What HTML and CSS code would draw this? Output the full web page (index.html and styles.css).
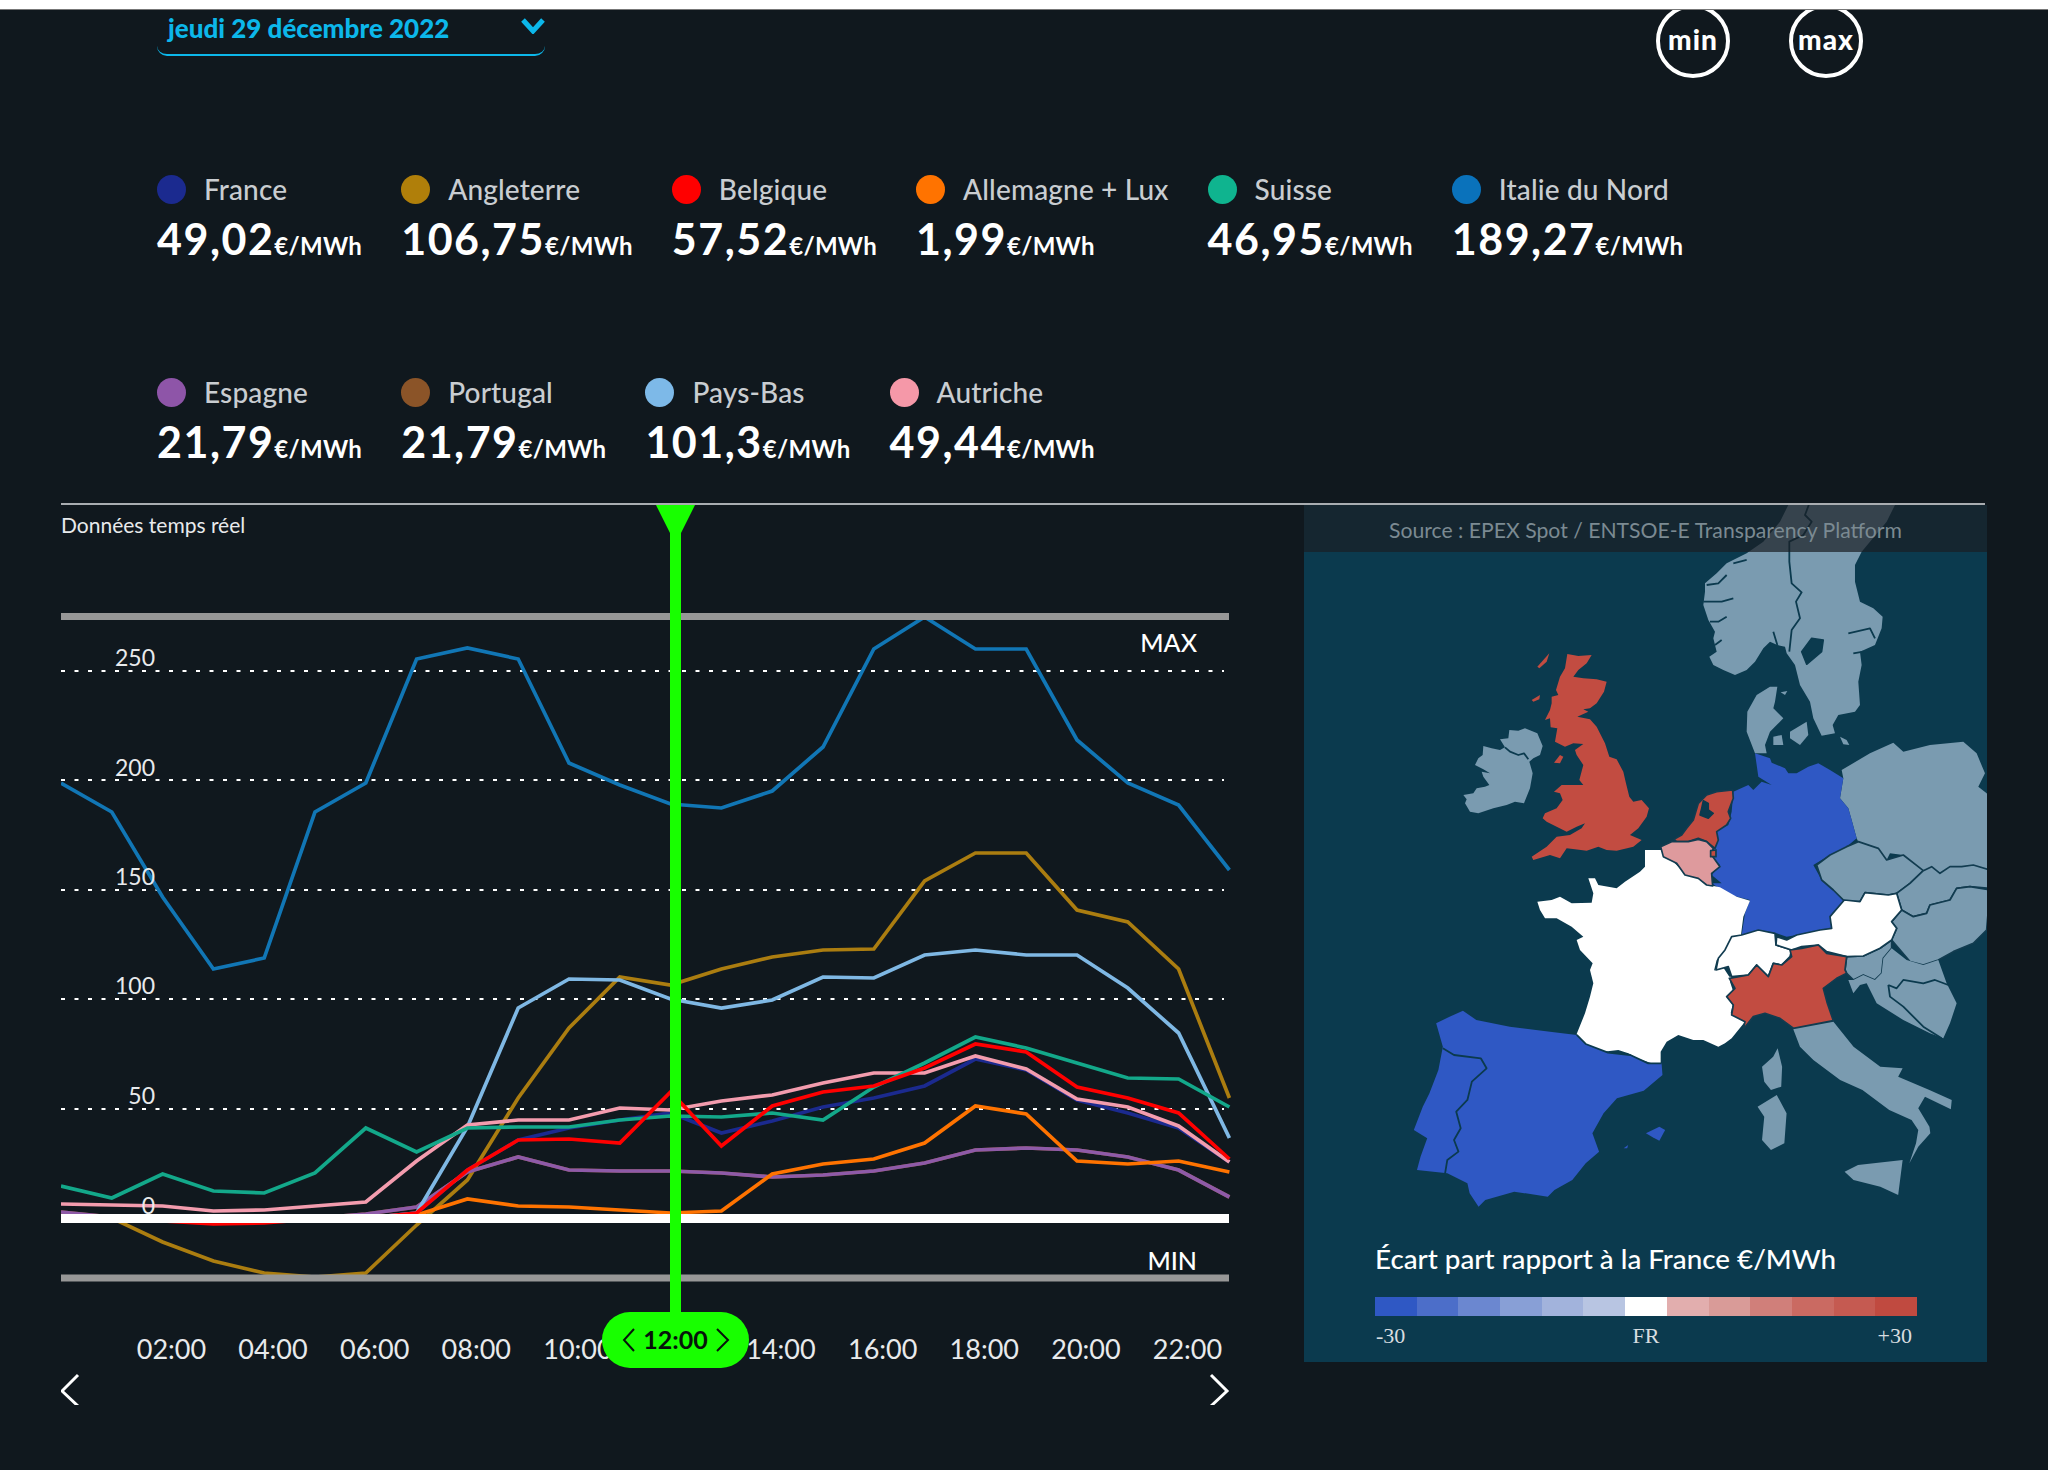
FILE: index.html
```html
<!DOCTYPE html>
<html lang="fr">
<head>
<meta charset="utf-8">
<title>Prix spot de l'électricité</title>
<link rel="stylesheet" href="styles.css">
</head>
<body>
<div class="topbar"></div>
<header class="controls">
  <div class="date">
    <span class="date-text">jeudi 29 décembre 2022</span>
    <svg class="date-chevron" viewBox="0 0 24 16"><path d="M2 2 L12 13 L22 2"/></svg>
  </div>
  <div class="switches">
    <button class="round">min</button>
    <button class="round">max</button>
  </div>
</header>
<section class="legend">
  <div class="legend-row">
    <div class="item"><div class="item-head"><i class="dot c-fr"></i><span>France</span></div><div class="value">49,02<small>€/MWh</small></div></div>
    <div class="item"><div class="item-head"><i class="dot c-uk"></i><span>Angleterre</span></div><div class="value">106,75<small>€/MWh</small></div></div>
    <div class="item"><div class="item-head"><i class="dot c-be"></i><span>Belgique</span></div><div class="value">57,52<small>€/MWh</small></div></div>
    <div class="item"><div class="item-head"><i class="dot c-de"></i><span>Allemagne + Lux</span></div><div class="value">1,99<small>€/MWh</small></div></div>
    <div class="item"><div class="item-head"><i class="dot c-ch"></i><span>Suisse</span></div><div class="value">46,95<small>€/MWh</small></div></div>
    <div class="item"><div class="item-head"><i class="dot c-it"></i><span>Italie du Nord</span></div><div class="value">189,27<small>€/MWh</small></div></div>
  </div>
  <div class="legend-row">
    <div class="item"><div class="item-head"><i class="dot c-es"></i><span>Espagne</span></div><div class="value">21,79<small>€/MWh</small></div></div>
    <div class="item"><div class="item-head"><i class="dot c-pt"></i><span>Portugal</span></div><div class="value">21,79<small>€/MWh</small></div></div>
    <div class="item"><div class="item-head"><i class="dot c-nl"></i><span>Pays-Bas</span></div><div class="value">101,3<small>€/MWh</small></div></div>
    <div class="item"><div class="item-head"><i class="dot c-at"></i><span>Autriche</span></div><div class="value">49,44<small>€/MWh</small></div></div>
  </div>
</section>
<div class="divider"></div>
<main class="main">
  <svg class="chart" viewBox="61 505 1243 900" width="1243" height="900">
    <text class="realtime" x="61" y="533">Données temps réel</text>
    <g class="grid">
      <line x1="61" x2="1224" y1="671" y2="671"/>
      <line x1="61" x2="1224" y1="780" y2="780"/>
      <line x1="61" x2="1224" y1="890" y2="890"/>
      <line x1="61" x2="1224" y1="999" y2="999"/>
      <line x1="61" x2="1224" y1="1109" y2="1109"/>
    </g>
    <g class="series">
      <polyline class="l-fr" points="61,1218 111.8,1218 162.6,1218 213.4,1220 264.2,1220 315,1219 365.8,1218 416.6,1213 467.4,1170 518.2,1140 569,1128 619.8,1120 670.6,1113 721.4,1133 772.2,1121 823,1107 873.8,1098 924.6,1086 975.4,1059 1026.2,1070 1077,1100 1127.8,1113 1178.6,1128 1229.4,1162"/>
      <polyline class="l-uk" points="61,1214 111.8,1218 162.6,1242 213.4,1261 264.2,1273 315,1277 365.8,1273 416.6,1225 467.4,1180 518.2,1098 569,1028 619.8,977 670.6,985 721.4,969 772.2,957 823,950 873.8,949 924.6,881 975.4,853 1026.2,853 1077,910 1127.8,922 1178.6,969 1229.4,1098"/>
      <polyline class="l-pt" points="61,1212 111.8,1217 162.6,1218 213.4,1219 264.2,1219 315,1218 365.8,1214 416.6,1207 467.4,1172 518.2,1157 569,1170 619.8,1171 670.6,1171 721.4,1173 772.2,1177 823,1175 873.8,1171 924.6,1163 975.4,1150 1026.2,1148 1077,1150 1127.8,1157 1178.6,1170 1229.4,1197"/>
      <polyline class="l-es" points="61,1212 111.8,1217 162.6,1218 213.4,1219 264.2,1219 315,1218 365.8,1214 416.6,1207 467.4,1172 518.2,1157 569,1170 619.8,1171 670.6,1171 721.4,1173 772.2,1177 823,1175 873.8,1171 924.6,1163 975.4,1150 1026.2,1148 1077,1150 1127.8,1157 1178.6,1170 1229.4,1197"/>
      <polyline class="l-de" points="61,1218 111.8,1218 162.6,1219 213.4,1222 264.2,1221 315,1219 365.8,1218 416.6,1215 467.4,1199 518.2,1206 569,1207 619.8,1210 670.6,1213 721.4,1211 772.2,1174 823,1164 873.8,1159 924.6,1143 975.4,1106 1026.2,1114 1077,1161 1127.8,1164 1178.6,1161 1229.4,1172"/>
      <polyline class="l-nl" points="61,1218 111.8,1218 162.6,1218 213.4,1220 264.2,1220 315,1219 365.8,1218 416.6,1213 467.4,1127 518.2,1008 569,979 619.8,980 670.6,999 721.4,1008 772.2,1000 823,977 873.8,978 924.6,955 975.4,950 1026.2,955 1077,955 1127.8,988 1178.6,1033 1229.4,1138"/>
      <polyline class="l-at" points="61,1204 111.8,1205 162.6,1206 213.4,1211 264.2,1210 315,1206 365.8,1202 416.6,1161 467.4,1125 518.2,1120 569,1120 619.8,1108 670.6,1110 721.4,1101 772.2,1095 823,1083 873.8,1073 924.6,1073 975.4,1056 1026.2,1069 1077,1099 1127.8,1107 1178.6,1126 1229.4,1162"/>
      <polyline class="l-ch" points="61,1186 111.8,1198 162.6,1174 213.4,1191 264.2,1193 315,1173 365.8,1128 416.6,1152 467.4,1128 518.2,1127 569,1127 619.8,1120 670.6,1116 721.4,1117 772.2,1113 823,1120 873.8,1087 924.6,1063 975.4,1037 1026.2,1048 1077,1063 1127.8,1078 1178.6,1079 1229.4,1107"/>
      <polyline class="l-it" points="61,783 111.8,812 162.6,897 213.4,969 264.2,958 315,812 365.8,783 416.6,659 467.4,648 518.2,659 569,763 619.8,785 670.6,804 721.4,808 772.2,791 823,747 873.8,649 924.6,617 975.4,649 1026.2,649 1077,740 1127.8,783 1178.6,805 1229.4,870"/>
      <polyline class="l-be" points="61,1218 111.8,1219 162.6,1221 213.4,1224 264.2,1223 315,1219 365.8,1218 416.6,1213 467.4,1170 518.2,1140 569,1139 619.8,1143 670.6,1092 721.4,1146 772.2,1106 823,1092 873.8,1086 924.6,1068 975.4,1044 1026.2,1052 1077,1087 1127.8,1098 1178.6,1113 1229.4,1159"/>
    </g>
    <line class="bound" x1="61" x2="1229" y1="616.5" y2="616.5"/>
    <line class="bound" x1="61" x2="1229" y1="1278" y2="1278"/>
    <line class="zero" x1="61" x2="1229" y1="1218.5" y2="1218.5"/>
    <g class="ylabels">
      <text x="155" y="666">250</text>
      <text x="155" y="776">200</text>
      <text x="155" y="885">150</text>
      <text x="155" y="994">100</text>
      <text x="155" y="1104">50</text>
      <text x="155" y="1214">0</text>
    </g>
    <text class="bound-label" x="1197" y="652">MAX</text>
    <text class="bound-label" x="1197" y="1270">MIN</text>
    <g class="xlabels">
      <text x="171.5" y="1359">02:00</text>
      <text x="273" y="1359">04:00</text>
      <text x="374.7" y="1359">06:00</text>
      <text x="476.3" y="1359">08:00</text>
      <text x="578" y="1359">10:00</text>
      <text x="781" y="1359">14:00</text>
      <text x="882.7" y="1359">16:00</text>
      <text x="984.3" y="1359">18:00</text>
      <text x="1086" y="1359">20:00</text>
      <text x="1187.5" y="1359">22:00</text>
    </g>
    <path class="cursor" d="M656 505 H695 L681 533 V1320 H670 V533 Z"/>
    <rect class="cursor" x="602" y="1312" width="147" height="56" rx="28"/>
    <text class="pill-text" x="675.5" y="1349">12:00</text>
    <path class="pill-chev" d="M634 1329 L624 1340 L634 1351"/>
    <path class="pill-chev" d="M717 1329 L728 1340 L717 1351"/>
    <path class="nav-chev" d="M78 1375 L62 1391 L78 1406"/>
    <path class="nav-chev" d="M1211 1375 L1227 1391 L1211 1406"/>
  </svg>
  <aside class="panel">
    <svg class="map" viewBox="1304 505 683 857">
      <g transform="translate(1690 505) scale(.3333)">
        <path class="land" d="M300 -10 L620 -10 590 50 515 140 495 180 495 230 510 290 550 310 578 335 575 370 555 420 510 440 515 480 505 530 510 600 495 620 445 630 428 660 435 685 395 692 370 640 360 590 330 540 315 480 290 445 285 425 262 420 240 410 220 430 195 470 170 495 135 510 100 495 70 480 58 455 80 440 70 400 75 380 55 345 40 300 45 260 45 235 80 205 110 175 170 145 220 110 270 50 Z"/>
        <path class="fjord" d="M360 -10 L345 30 365 50 340 90 298 110 298 170 305 235 335 262 318 290 330 340 305 375 298 440"/>
        <path class="fjord" d="M40 290 L95 290 130 280 M50 240 L85 235 110 210 M60 350 L85 350 110 335 M130 175 L170 165 M75 420 L95 405 M250 380 L262 420 M475 385 L540 370 555 400 M490 445 L520 440"/>
        <path class="sea" d="M335 440 L365 400 400 405 395 440 350 478 Z"/>
        <path class="land" d="M195 745 L170 680 172 620 200 570 240 545 262 545 255 590 250 610 280 640 260 660 240 680 225 720 230 745 Z"/>
        <path class="land" d="M250 695 L275 690 280 720 250 720 Z"/>
        <path class="land" d="M300 680 L350 650 355 690 330 720 300 700 Z"/>
        <path class="land" d="M450 695 L470 705 478 720 460 718 Z"/>
        <path class="land" d="M272 562 L292 558 285 570 Z"/>
      </g>
      <g transform="translate(1450 640) scale(.3333)">
        <path class="land" d="M100 318 L125 325 150 330 165 322 150 298 175 295 178 270 205 272 225 265 262 280 278 318 270 345 250 355 238 365 248 400 240 445 222 490 195 485 170 495 130 505 85 520 60 515 45 490 50 478 40 465 70 460 80 445 105 440 118 435 100 410 95 395 120 400 100 388 75 375 85 355 98 345 Z"/>
        <path class="fjord" d="M165 322 L180 335 205 345 222 340 235 358"/>
        <path class="red" d="M352 42 L385 48 425 45 410 70 385 90 370 110 400 115 440 118 470 125 462 155 440 190 420 205 400 208 415 215 382 230 420 238 440 260 465 310 478 350 500 358 520 395 528 430 538 470 550 485 575 480 597 505 590 530 565 565 540 585 575 600 550 620 500 632 470 630 445 620 410 632 375 628 350 625 330 655 300 645 250 660 245 650 290 620 320 590 360 585 395 565 405 550 380 560 350 575 320 560 290 545 278 535 285 520 320 505 338 480 330 460 312 455 335 435 385 435 400 435 388 420 400 375 380 345 375 330 400 312 370 310 345 320 315 305 322 265 302 262 300 235 285 240 300 210 305 190 305 170 325 165 318 150 330 110 345 85 Z"/>
        <path class="red" d="M262 80 L298 40 290 65 268 85 Z"/>
        <path class="red" d="M245 180 L270 165 268 178 250 185 Z"/>
        <path class="red" d="M312 368 L330 345 340 350 330 370 Z"/>
      </g>
      <g transform="translate(1690 740) scale(.3333)">
        <path class="land" d="M455 90 L540 40 610 8 640 35 720 15 820 5 860 40 885 100 865 140 890 160 900 170 900 395 850 375 815 380 780 380 750 400 725 380 700 395 640 345 600 340 590 360 565 325 505 305 500 295 485 240 475 205 450 175 460 115 Z"/>
        <path class="blue" d="M195 40 L240 55 245 68 285 85 295 100 320 100 355 80 385 70 420 90 460 115 450 175 475 205 485 240 500 295 470 320 420 345 370 375 395 420 430 450 463 480 420 530 435 575 425 565 390 570 320 585 290 590 260 580 205 570 155 585 165 520 180 480 120 465 65 430 95 430 65 405 90 375 60 350 75 320 70 295 80 270 115 255 125 215 130 155 175 135 190 150 215 125 245 135 205 110 Z"/>
        <path class="land border" d="M380 375 L420 345 470 320 505 305 565 325 590 360 640 345 700 392 660 430 620 460 595 465 525 458 510 485 465 485 430 450 395 420 Z"/>
        <path class="land border" d="M620 460 L660 430 700 392 725 380 750 400 780 380 815 380 850 375 900 390 900 445 840 440 800 445 780 480 720 495 710 520 670 530 635 510 Z"/>
        <path class="land border" d="M635 510 L670 530 710 520 720 495 780 480 800 445 840 440 900 450 890 570 850 610 790 635 745 660 700 675 660 665 605 600 620 565 605 545 Z"/>
        <path class="land border" d="M470 650 L520 648 570 625 605 600 605 625 580 655 575 700 555 720 520 705 490 720 470 700 465 690 Z"/>
        <path class="land" d="M605 625 L650 660 700 675 745 660 770 730 800 790 780 850 760 895 720 880 640 840 560 790 530 730 510 735 490 760 475 720 490 720 520 705 555 720 575 700 580 655 Z"/>
        <path class="fjord" d="M595 735 L620 745 640 720 700 730 735 720 775 735 M595 735 L600 770 640 800 700 860 755 895"/>
      </g>
      <g transform="translate(1530 850) scale(.3333)">
        <path class="white" d="M345 0 L395 0 430 35 465 70 495 65 535 105 570 112 620 140 660 152 640 200 633 255 605 265 585 305 560 330 552 362 575 345 598 380 610 380 600 395 610 425 590 440 608 465 602 490 645 515 605 565 585 580 565 590 520 570 490 570 445 555 410 575 392 605 392 640 365 640 320 625 295 610 265 600 220 605 190 595 150 575 140 552 165 490 180 440 190 400 180 360 188 340 150 300 140 270 160 260 125 230 80 205 45 205 30 180 22 155 65 150 90 140 125 160 185 158 190 130 175 85 195 85 205 105 260 115 285 95 330 65 345 50 Z"/>
      </g>
      <g transform="translate(1690 740) scale(.3333)">
        <path class="white border" d="M78 690 L85 655 105 630 125 590 155 585 205 570 255 580 258 615 305 630 300 650 275 675 250 670 235 710 200 675 175 705 125 710 115 680 Z"/>
        <path class="white border" d="M420 530 L463 480 510 485 525 458 595 465 620 460 635 510 605 545 620 565 605 600 570 625 520 648 470 650 410 635 385 615 335 620 305 630 258 615 260 590 290 600 320 585 390 570 425 565 Z"/>
        <path class="red border" d="M118 715 L175 705 200 675 235 710 250 670 275 675 305 650 300 630 335 625 385 615 410 640 470 650 465 690 470 700 440 715 400 745 412 790 430 842 310 865 270 835 225 820 190 830 160 868 165 845 125 825 130 795 110 770 135 745 Z"/>
      </g>
      <g transform="translate(1450 640) scale(.3333)">
        <path class="red border" d="M770 465 L800 455 848 450 850 475 835 515 842 535 830 555 800 575 805 600 795 625 770 605 745 595 715 605 680 605 672 598 695 585 710 565 730 540 745 490 Z"/>
        <path class="sea" d="M760 482 L775 490 775 510 790 520 775 535 750 525 755 505 Z"/>
        <path class="pink border" d="M632 620 L665 605 715 605 745 598 770 605 790 625 785 645 810 680 785 700 788 738 770 735 745 715 705 705 680 670 640 650 Z"/>
        <path class="red border" d="M782 632 L798 630 798 650 782 650 Z"/>
      </g>
      <g transform="translate(1300 900) scale(.4464 .3333)">
        <path class="blue" d="M365 332 L395 360 470 380 560 395 620 405 640 432 690 458 740 465 780 490 810 490 812 525 770 572 710 595 680 640 655 700 670 755 640 790 610 840 570 870 555 890 480 875 415 900 400 920 380 880 375 850 330 820 262 810 270 770 285 715 255 690 275 620 290 580 310 510 320 440 305 370 335 350 Z"/>
        <path class="fjord" d="M320 445 L345 465 405 475 418 505 385 545 375 600 350 635 360 685 345 720 355 755 330 780 325 820"/>
        <path class="fjord" d="M620 405 L640 432 690 458 740 465 780 490 810 490"/>
        <path class="blue" d="M775 700 L805 680 818 690 805 722 790 712 Z"/>
        <path class="blue" d="M725 745 L735 735 733 745 Z"/>
        <path class="land" d="M1105 388 L1195 365 1240 440 1300 500 1350 505 1340 530 1410 570 1460 600 1458 628 1400 590 1385 625 1410 680 1412 700 1385 740 1365 790 1380 730 1385 690 1370 660 1320 630 1260 570 1210 540 1150 480 1120 440 Z"/>
        <path class="land" d="M1220 815 L1250 795 1350 780 1340 885 1300 860 1240 840 Z"/>
        <path class="land" d="M1070 445 L1080 500 1078 560 1055 570 1040 545 1035 500 1060 470 Z"/>
        <path class="land" d="M1068 585 L1090 640 1085 730 1055 750 1035 720 1040 650 1025 620 Z"/>
      </g>
    </svg>
    <div class="source">Source : EPEX Spot / ENTSOE-E Transparency Platform</div>
    <div class="scale">
      <div class="scale-title">Écart part rapport à la France €/MWh</div>
      <div class="scale-bar">
        <i class="s1"></i><i class="s2"></i><i class="s3"></i><i class="s4"></i><i class="s5"></i><i class="s6"></i><i class="s7"></i><i class="s8"></i><i class="s9"></i><i class="s10"></i><i class="s11"></i><i class="s12"></i><i class="s13"></i>
      </div>
      <div class="scale-labels"><span class="sl-min">-30</span><span>FR</span><span class="sl-max">+30</span></div>
    </div>
  </aside>
</main>
</body>
</html>
```
FILE: styles.css
```css
* { box-sizing: border-box; }
html, body { margin: 0; padding: 0; }
body {
  background: #10181e;
  color: #fff;
  font-family: Lato, "Open Sans", sans-serif;
  height: 1470px;
  overflow: hidden;
}
.topbar {
  height: 10px;
  background: #fff;
  border-bottom: 1px solid #777;
  position: relative;
  z-index: 2;
}
.controls {
  height: 67px;
  padding: 0 185px 0 157px;
  display: flex;
  justify-content: space-between;
}
.date {
  width: 388px;
  height: 46px;
  padding: 0 0 0 11px;
  display: flex;
  justify-content: space-between;
  border-bottom: 2px solid #0cb7ea;
  border-radius: 0 0 10px 10px;
  color: #0cb7ea;
  font-size: 26px;
  font-weight: 900;
  line-height: 36px;
}
.date-chevron { width: 24px; height: 16px; margin-top: 8px; }
.date-chevron path { fill: none; stroke: #0cb7ea; stroke-width: 5; }
.switches { display: flex; gap: 59px; margin-top: -6px; }
.round {
  width: 74px;
  height: 74px;
  padding: 0 0 4px;
  border: 4px solid #fff;
  border-radius: 50%;
  background: none;
  color: #fff;
  font: 900 28px Lato, sans-serif;
  letter-spacing: 1px;
}
.legend { padding: 98px 0 0 157px; }
.legend-row { display: flex; gap: 39px; height: 203px; }
.item { height: 90px; }
.item-head {
  display: flex;
  align-items: center;
  gap: 18px;
  height: 29px;
  color: #c9cdd1;
  font-size: 28px;
  font-weight: 500;
  letter-spacing: .15px;
}
.item-head span { margin-bottom: 2px; }
.dot { width: 29px; height: 29px; border-radius: 50%; }
.c-fr { background: #1b2a8f; }
.c-uk { background: #b07f0a; }
.c-be { background: #f00; }
.c-de { background: #ff7300; }
.c-ch { background: #0fb48f; }
.c-it { background: #0a72bb; }
.c-es { background: #8e55a8; }
.c-pt { background: #8b5428; }
.c-nl { background: #7db9e8; }
.c-at { background: #f598a8; }
.value {
  margin-top: 8px;
  font-size: 43px;
  font-weight: 700;
  line-height: 54px;
  letter-spacing: 1.5px;
  white-space: nowrap;
}
.value small { font-size: 24px; letter-spacing: .3px; }
.divider {
  height: 2px;
  margin: -78px 63px 0 61px;
  background: #a9adb1;
}
.main { display: flex; margin: 0 0 0 61px; }
.chart { flex: none; display: block; }
.chart text { fill: #e8eaec; font-family: Lato, sans-serif; }
.realtime { font-size: 21px; }
.grid line { stroke: #fff; stroke-width: 2; stroke-dasharray: 4 9.5; }
.series polyline { fill: none; stroke-width: 3.7; stroke-linejoin: miter; }
.l-fr { stroke: #1b2a8f; }
.l-uk { stroke: #ab7d10; }
.l-pt { stroke: #8b5428; }
.l-es { stroke: #8e5aa8; }
.l-de { stroke: #ff7300; }
.l-nl { stroke: #7fb8e4; }
.l-at { stroke: #f39cae; }
.l-ch { stroke: #13a88a; }
.l-it { stroke: #1176b5; }
.l-be { stroke: #f00; }
.bound { stroke: #979797; stroke-width: 7; }
.zero { stroke: #fff; stroke-width: 9; }
.ylabels text { font-size: 23px; text-anchor: end; }
.chart .bound-label { font-size: 25px; font-weight: 500; fill: #fff; text-anchor: end; }
.xlabels text { font-size: 27px; text-anchor: middle; }
.cursor { fill: #18ff00; }
.chart .pill-text { fill: #06130a; font-size: 25px; font-weight: 700; text-anchor: middle; }
.pill-chev { fill: none; stroke: #06130a; stroke-width: 2; }
.nav-chev { fill: none; stroke: #fff; stroke-width: 3; }
.panel {
  flex: none;
  position: relative;
  width: 683px;
  height: 857px;
  background: #0b3a4e;
  display: flex;
  flex-direction: column;
  justify-content: space-between;
}
.map { position: absolute; inset: 0; width: 100%; height: 100%; }
.map path { vector-effect: non-scaling-stroke; stroke-linejoin: round; }
.land { fill: #7a9bb0; }
.red { fill: #c24c41; }
.blue { fill: #2f58c4; }
.white { fill: #fff; }
.pink { fill: #de9a9d; }
.sea { fill: #0b3a4e; stroke: #0b3a4e; stroke-width: 1.5; }
.border { stroke: #123c50; stroke-width: 1.7; }
.fjord { fill: none; stroke: #0b3a4e; stroke-width: 1.8; }
.source {
  position: relative;
  height: 47px;
  background: rgba(25, 30, 36, .7);
  color: #7b8a92;
  font-size: 21.2px;
  line-height: 51px;
  text-align: center;
}
.scale { position: relative; padding: 0 70px 13px 71px; }
.scale-title { font-size: 27.8px; font-weight: 500; line-height: 34px; margin-bottom: 21px; }
.scale-bar { display: flex; height: 19px; }
.scale-bar i { flex: 1; }
.s1 { background: #2f58c4; }
.s2 { background: #4c6ec9; }
.s3 { background: #6b87d0; }
.s4 { background: #889fd6; }
.s5 { background: #a2b3dc; }
.s6 { background: #b8c5e2; }
.s7 { background: #fff; }
.s8 { background: #e2aeae; }
.s9 { background: #d99b98; }
.s10 { background: #d07f7a; }
.s11 { background: #ca6a62; }
.s12 { background: #c55a51; }
.s13 { background: #c04a40; }
.scale-labels {
  display: grid;
  grid-template-columns: 1fr auto 1fr;
  margin-top: 7px;
  font-family: "Liberation Serif", serif;
  font-size: 22px;
  line-height: 26px;
  color: #d8dde0;
}
.sl-min { padding-left: 1px; }
.sl-max { padding-right: 5px; text-align: right; }
```
